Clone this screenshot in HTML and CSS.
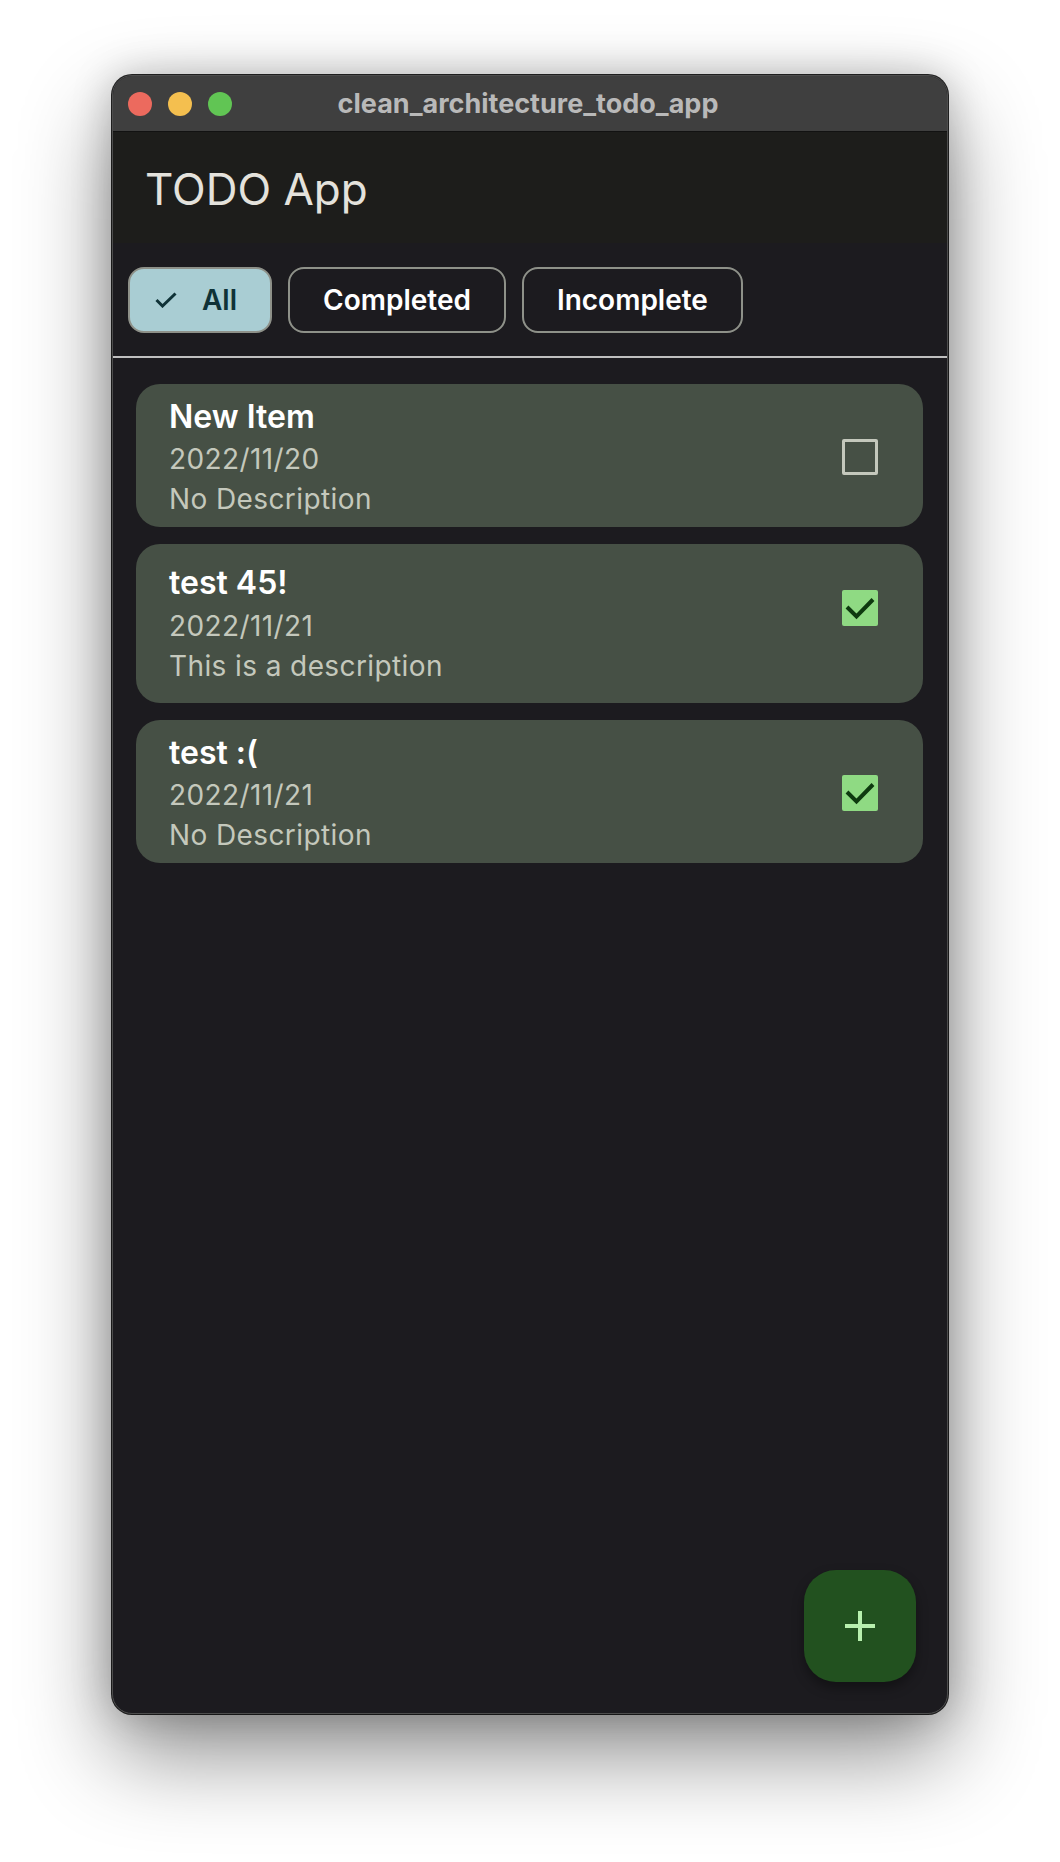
FILE: index.html
```html
<!DOCTYPE html>
<html lang="en">
<head>
<meta charset="utf-8">
<title>clean_architecture_todo_app</title>
<link rel="stylesheet" href="styles.css">
</head>
<body>
<div class="window">
  <div class="titlebar">
    <div class="lights">
      <span class="light red"></span>
      <span class="light yellow"></span>
      <span class="light green"></span>
    </div>
    <div class="wintitle">clean_architecture_todo_app</div>
  </div>
  <header class="appbar">
    <h1 class="apptitle">TODO App</h1>
  </header>
  <div class="filters">
    <button class="chip chip-selected">
      <svg class="chip-check" width="22" height="16" viewBox="0 0 22 16"><polyline points="1.5,8 7.5,14 20.5,1.5" fill="none" stroke="currentColor" stroke-width="3"/></svg>
      <span>All</span>
    </button>
    <button class="chip">Completed</button>
    <button class="chip">Incomplete</button>
  </div>
  <main class="content">
    <ul class="list">
      <li class="card">
        <div class="card-text">
          <div class="card-title">New Item</div>
          <div class="card-sub">2022/11/20</div>
          <div class="card-sub">No Description</div>
        </div>
        <span class="check"></span>
      </li>
      <li class="card card-tall">
        <div class="card-text">
          <div class="card-title">test 45!</div>
          <div class="card-sub">2022/11/21</div>
          <div class="card-sub">This is a description</div>
        </div>
        <span class="check checked">
          <svg width="36" height="36" viewBox="0 0 36 36"><polyline points="5,17 14.5,26.5 31,9.5" fill="none" stroke="#0e3a0f" stroke-width="4"/></svg>
        </span>
      </li>
      <li class="card">
        <div class="card-text">
          <div class="card-title">test :(</div>
          <div class="card-sub">2022/11/21</div>
          <div class="card-sub">No Description</div>
        </div>
        <span class="check checked">
          <svg width="36" height="36" viewBox="0 0 36 36"><polyline points="5,17 14.5,26.5 31,9.5" fill="none" stroke="#0e3a0f" stroke-width="4"/></svg>
        </span>
      </li>
    </ul>
    <button class="fab" aria-label="Add">
      <svg width="30" height="30" viewBox="0 0 30 30"><path d="M15 0v30M0 15h30" stroke="#b8f0ae" stroke-width="4"/></svg>
    </button>
  </main>
</div>
</body>
</html>
```
FILE: styles.css
```css
* { box-sizing: border-box; }
html, body { margin: 0; padding: 0; }
body {
  background: #ffffff;
  font-family: "Inter", "Noto Sans", sans-serif;
  padding-top: 75px;
  height: 1862px;
  overflow: hidden;
}
.window {
  width: 836px;
  height: 1639px;
  margin: 0 auto;
  border: 1px solid #4d4d4d;
  border-radius: 20px;
  overflow: hidden;
  background: #1c1b1f;
  display: flex;
  flex-direction: column;
  box-shadow: 0 0 0 1px rgba(0,0,0,0.85), 0 40px 90px rgba(0,0,0,0.45), 0 0 40px rgba(0,0,0,0.22);
}
.titlebar {
  height: 56px;
  flex: none;
  background: #3f3f3f;
  border-bottom: 1px solid #121212;
  display: flex;
  align-items: center;
  position: relative;
}
.lights {
  display: flex;
  gap: 16px;
  padding-left: 15px;
}
.light {
  width: 24px;
  height: 24px;
  border-radius: 50%;
  display: block;
}
.red { background: #ec6a5e; }
.yellow { background: #f4bf4f; }
.green { background: #61c554; }
.wintitle {
  position: absolute;
  left: 0;
  right: 0;
  text-align: center;
  font-weight: 700;
  font-size: 27px;
  color: #b9b9b9;
  padding-right: 4px;
}
.appbar {
  height: 111px;
  flex: none;
  background: #1d1d1b;
  display: flex;
  align-items: center;
  padding: 3px 0 0 32px;
}
.apptitle {
  margin: 0;
  font-weight: 400;
  font-size: 44px;
  color: #e4e2dc;
}
.filters {
  flex: none;
  display: flex;
  gap: 16px;
  padding: 24px 15px 23px;
  border-bottom: 2px solid #bfbfbf;
}
.chip {
  height: 66px;
  border: 2px solid #8e9189;
  border-radius: 16px;
  background: transparent;
  color: #ffffff;
  font-family: "Inter", "Noto Sans", sans-serif;
  font-weight: 600;
  font-size: 28px;
  padding: 0 33px;
  display: flex;
  align-items: center;
  cursor: pointer;
}
.chip-selected {
  background: #a9cdd3;
  color: #0f3237;
  padding: 0 33px 0 25px;
  gap: 25px;
}
.chip-check { display: block; }
.content {
  flex: 1;
  position: relative;
}
.list {
  list-style: none;
  margin: 0;
  padding: 26px 24px 0 23px;
  display: flex;
  flex-direction: column;
  gap: 17px;
}
.card {
  background: #465045;
  border-radius: 24px;
  display: flex;
  align-items: center;
  padding: 11px 45px 8px 33px;
}
.card-tall {
  padding-top: 16px;
  padding-bottom: 17px;
}
.card-text { flex: 1; }
.card-title {
  font-size: 32px;
  line-height: 44px;
  font-weight: 600;
  color: #ffffff;
}
.card-tall .card-title { line-height: 46px; }
.card-sub {
  font-size: 28px;
  line-height: 40px;
  font-weight: 400;
  letter-spacing: 0.4px;
  color: #c4c8bc;
}
.check {
  width: 36px;
  height: 36px;
  border: 3px solid #c4c8bc;
  border-radius: 2px;
  flex: none;
  position: relative;
}
.check.checked {
  border: none;
  background: #8fda83;
}
.check svg { display: block; }
.card-tall .check {
  align-self: flex-start;
  margin-top: 30px;
}
.fab {
  position: absolute;
  right: 31px;
  bottom: 31px;
  width: 112px;
  height: 112px;
  border: none;
  border-radius: 32px;
  background: #22511f;
  display: flex;
  align-items: center;
  justify-content: center;
  box-shadow: 0 6px 12px rgba(0,0,0,0.35);
  cursor: pointer;
}
.fab svg { display: block; }
```
